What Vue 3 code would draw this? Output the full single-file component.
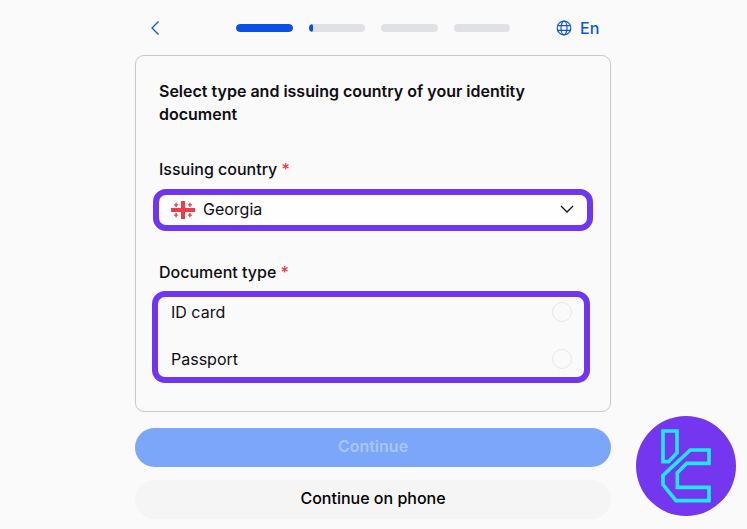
<script setup>
const bars = [
  { id: 1, fill: 100 },
  { id: 2, fill: 8 },
  { id: 3, fill: 0 },
  { id: 4, fill: 0 },
]
const docs = ['ID card', 'Passport']
</script>

<template>
  <div class="page">
    <div class="column">
      <header class="top">
        <svg class="back" width="10" height="16" viewBox="0 0 10 16" fill="none">
          <path d="M8.500 1.500 2 8l6.500 6.500" stroke="#0f55d8" stroke-width="1.3" />
        </svg>
        <div class="steps">
          <div v-for="b in bars" :key="b.id" class="step">
            <div class="step-fill" :style="{ width: b.fill + '%' }"></div>
          </div>
        </div>
        <div class="lang">
          <svg width="16" height="16" viewBox="0 0 16 16" fill="none" stroke="#0f55d8" stroke-width="1.2">
            <circle cx="8" cy="8" r="6.800" />
            <ellipse cx="8" cy="8" rx="3" ry="6.800" />
            <path d="M1.600 5.600h12.800M1.600 10.400h12.800" />
          </svg>
          <span>En</span>
        </div>
      </header>

      <main class="card">
        <h1 class="title">Select type and issuing country of your identity document</h1>

        <div class="label label-country">Issuing country <span class="req">*</span></div>
        <div class="select">
          <svg class="flag" width="24" height="18" viewBox="0 0 24 18">
            <g fill="#ee3c4c">
              <rect x="0" y="7" width="24" height="4" />
              <rect x="10" y="0" width="4" height="18" />
              <path d="M4.400 1.800h1.400v1.400h1.400v1.400H5.800V6H4.400V4.600H3V3.200h1.400zM18.200 1.800h1.400v1.400H21v1.400h-1.400V6h-1.400V4.600h-1.400V3.200h1.400zM4.400 12h1.400v1.400h1.400v1.400H5.800v1.400H4.400v-1.400H3v-1.400h1.400zM18.200 12h1.400v1.400H21v1.400h-1.400v1.400h-1.400v-1.400h-1.400v-1.400h1.400z" />
            </g>
          </svg>
          <span class="country">Georgia</span>
          <svg class="chev" width="14" height="8" viewBox="0 0 14 8" fill="none">
            <path d="M1 1l6 6 6-6" stroke="#16161a" stroke-width="1.3" />
          </svg>
        </div>

        <div class="label label-doc">Document type <span class="req">*</span></div>
        <div class="radios">
          <div v-for="d in docs" :key="d" class="radio-row">
            <span>{{ d }}</span>
            <span class="radio"></span>
          </div>
        </div>
      </main>

      <button class="btn primary" type="button">Continue</button>
      <button class="btn secondary" type="button">Continue on phone</button>
    </div>

    <svg class="badge" width="100" height="100" viewBox="0 0 300 300" fill="none">
      <circle cx="150" cy="150" r="150" fill="#7436ee" />
      <g stroke="#1ee8f5" stroke-width="11" stroke-linejoin="miter">
        <path d="M81 45h42v65l-25 27H81z" />
        <path d="M163 102h56v40h-67l-28 28v44h95v40h-99l-39-48v-28z" />
      </g>
    </svg>
  </div>
</template>

<style>
html, body { margin: 0; background: #fafafb; }
</style>

<style scoped>
.page {
  position: relative;
  width: 747px;
  height: 529px;
  overflow: hidden;
  background: #fafafb;
  font-family: Inter, "Liberation Sans", sans-serif;
  color: #0d0d12;
}
.column {
  width: 476px;
  margin-left: 135px;
  display: flex;
  flex-direction: column;
}
.top {
  height: 55px;
  display: flex;
  align-items: center;
  box-sizing: border-box;
  padding-left: 15px;
}
.back { flex: none; }
.steps {
  display: flex;
  gap: 16px;
  margin-left: 76px;
}
.step {
  width: 56.500px;
  height: 8px;
  border-radius: 4px;
  background: #e0e1e4;
  overflow: hidden;
}
.step-fill { height: 100%; background: #0a50e6; border-radius: 4px; }
.lang {
  display: flex;
  align-items: center;
  gap: 8px;
  margin-left: 46px;
  color: #0f55d8;
  font-size: 16px;
  font-weight: 500;
}
.card {
  height: 357px;
  box-sizing: border-box;
  border: 1px solid #c9c9cc;
  border-radius: 9px;
  padding: 24px 17px 0;
  display: flex;
  flex-direction: column;
}
.title {
  margin: 0 0 0 6px;
  font-size: 16px;
  line-height: 23px;
  font-weight: 600;
  width: 400px;
}
.label {
  margin-left: 6px;
  font-size: 16px;
  line-height: 24px;
  font-weight: 500;
}
.label-country { margin-top: 31px; }
.label-doc { margin-top: 29px; }
.req { color: #e8394a; }
.select {
  margin-top: 8px;
  width: 440px;
  height: 42px;
  box-sizing: border-box;
  border: 6px solid #6f35f2;
  border-radius: 13px;
  background: #fefeff;
  display: flex;
  align-items: center;
  padding: 0 13px 2px 12px;
  font-size: 16px;
}
.flag { flex: none; margin-top: 2px; }
.country { margin-left: 8px; flex: 1; }
.radios {
  margin-top: 7px;
  margin-left: -1px;
  width: 438px;
  height: 92px;
  box-sizing: border-box;
  border: 6px solid #6f35f2;
  border-radius: 13px;
  display: flex;
  flex-direction: column;
  padding: 0 12px 0 13px;
  gap: 17px;
  font-size: 16px;
}
.radio-row {
  height: 30px;
  display: flex;
  align-items: center;
  justify-content: space-between;
}
.radio {
  width: 20px;
  height: 20px;
  box-sizing: border-box;
  border: 1px solid #e7e7e9;
  border-radius: 50%;
}
.btn {
  width: 476px;
  height: 39px;
  border: 0;
  border-radius: 20px;
  font-family: inherit;
  font-size: 16px;
  padding: 0 0 3px;
}
.primary {
  margin-top: 16px;
  background: #7ca6f9;
  color: #a8c5fb;
  font-weight: 600;
}
.secondary {
  margin-top: 13px;
  background: #f5f5f6;
  color: #000;
  font-weight: 450;
}
.badge {
  position: absolute;
  left: 636px;
  top: 416px;
}
</style>
